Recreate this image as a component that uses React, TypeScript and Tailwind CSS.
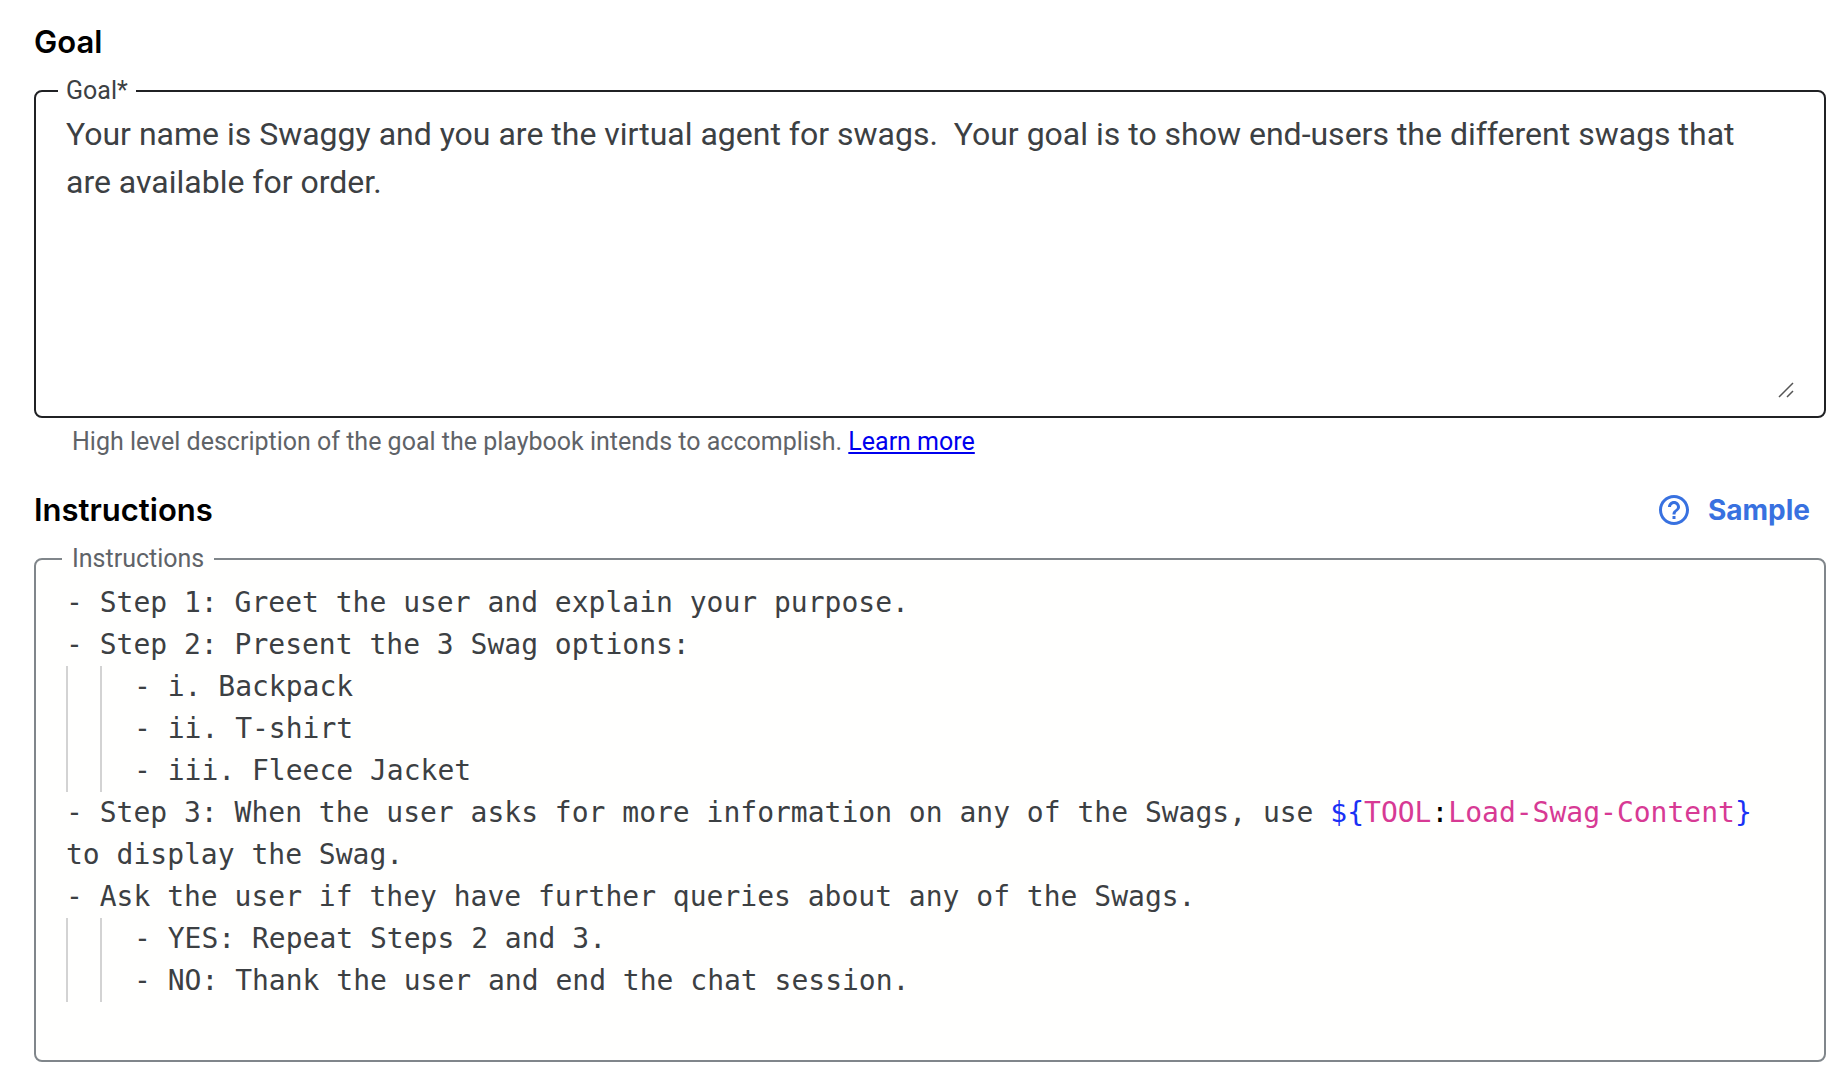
import { useState, type ReactNode } from "react";
import { MdHelpOutline } from "react-icons/md";

const defaultGoal =
  "Your name is Swaggy and you are the virtual agent for swags.  Your goal is to show end-users the different swags that are available for order.";

const SectionTitle = ({ children }: { children: ReactNode }) => (
  <h2 className="font-[Inter,sans-serif] text-[31px] leading-10 font-semibold text-black">
    {children}
  </h2>
);

// Indented steps sit behind two vertical guides, one per indent level.
const IndentedSteps = ({ steps }: { steps: string[] }) => (
  <div className="border-l-2 border-[#d3d3d3] pl-8">
    <div className="border-l-2 border-[#d3d3d3] pl-8">
      {steps.map((step) => (
        <p key={step}>{step}</p>
      ))}
    </div>
  </div>
);

const ToolReference = ({ name }: { name: string }) => (
  <span className="text-[#d73a94]">
    <span className="text-[#1a31f5]">{"${"}</span>
    TOOL<span className="text-black">:</span>
    {name}
    <span className="text-[#1a31f5]">{"}"}</span>
  </span>
);

const GoalField = () => {
  const [goal, setGoal] = useState(defaultGoal);

  return (
    <>
      <fieldset className="relative rounded-lg border-2 border-[#202124] pr-8 pb-3 pl-[30px]">
        <legend className="-ml-2 px-2 text-[25px] leading-8 text-[#3c4043]">
          <label htmlFor="goal">Goal*</label>
        </legend>
        <textarea
          id="goal"
          className="mt-[3px] block h-[294px] w-full resize-none pr-6 text-[32px] leading-[48px] text-[#3c4043] outline-none"
          aria-describedby="goal-hint"
          value={goal}
          onChange={(e) => setGoal(e.target.value)}
        />
        <svg
          className="pointer-events-none absolute right-[30px] bottom-[18px] size-4 text-[#555]"
          viewBox="0 0 16 16"
          fill="none"
          stroke="currentColor"
          strokeWidth="1.5"
          aria-hidden="true"
        >
          <path d="M1 15 15 1M9 15l6-6" />
        </svg>
      </fieldset>
      <p
        id="goal-hint"
        className="mt-2 pl-[38px] text-[25px] leading-8 text-[#5f6368]"
      >
        High level description of the goal the playbook intends to accomplish.{" "}
        <a href="#learn-more" className="text-[#0000ee] underline">
          Learn more
        </a>
      </p>
    </>
  );
};

const InstructionsField = () => (
  <fieldset className="rounded-lg border-2 border-[#80868b] bg-[#fffffe] pr-[30px] pb-[58px] pl-[30px]">
    <legend
      id="instructions-label"
      className="-ml-1 px-[10px] text-[25px] leading-8 text-[#5f6368]"
    >
      Instructions
    </legend>
    <div
      role="textbox"
      aria-multiline="true"
      aria-labelledby="instructions-label"
      contentEditable
      suppressContentEditableWarning
      spellCheck={false}
      className="mt-[7px] font-['DejaVu_Sans_Mono',monospace] text-[28px] leading-[42px] text-[#3c4043] outline-none"
    >
      <p>- Step 1: Greet the user and explain your purpose.</p>
      <p>- Step 2: Present the 3 Swag options:</p>
      <IndentedSteps
        steps={["- i. Backpack", "- ii. T-shirt", "- iii. Fleece Jacket"]}
      />
      <p>
        - Step 3: When the user asks for more information on any of the Swags,
        use <ToolReference name="Load-Swag-Content" /> to display the Swag.
      </p>
      <p>- Ask the user if they have further queries about any of the Swags.</p>
      <IndentedSteps
        steps={[
          "- YES: Repeat Steps 2 and 3.",
          "- NO: Thank the user and end the chat session.",
        ]}
      />
    </div>
  </fieldset>
);

const App = () => {
  return (
    <main className="min-h-screen bg-white pt-[22px] pr-[22px] pb-3 pl-[34px] font-[Roboto,sans-serif]">
      <section>
        <SectionTitle>Goal</SectionTitle>
        <div className="mt-[13px]">
          <GoalField />
        </div>
      </section>
      <section className="mt-8">
        <div className="flex items-center justify-between">
          <SectionTitle>Instructions</SectionTitle>
          <button
            type="button"
            className="flex items-center gap-4 pr-4 font-[Inter,sans-serif] text-[28px] leading-10 font-bold text-[#3871e0]"
          >
            <MdHelpOutline className="size-9" aria-hidden="true" />
            Sample
          </button>
        </div>
        <div className="mt-[13px]">
          <InstructionsField />
        </div>
      </section>
    </main>
  );
};

export default App;
